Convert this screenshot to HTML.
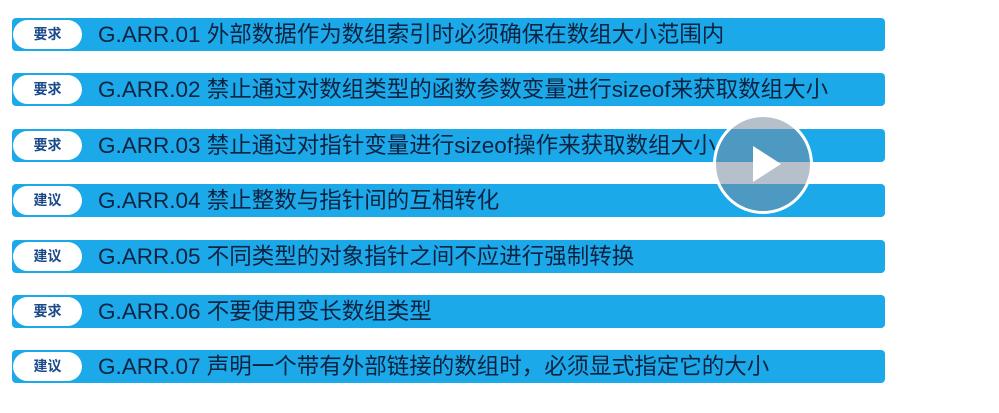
<!DOCTYPE html>
<html><head><meta charset="utf-8"><style>
body{margin:0;width:999px;height:413px;background:#fff;position:relative;overflow:hidden;font-family:"Liberation Sans","Noto Sans CJK SC",sans-serif}
.r{position:absolute;left:12px;width:873px;height:33px;background:#1ca9ea;border-radius:4px}
.p{position:absolute;left:1px;top:2px;width:69px;height:29px;background:#fff;border-radius:15px;color:#1a4a8a;font-size:14px;font-weight:bold;line-height:29px;text-align:center}
.t{position:absolute;left:86px;top:0;line-height:34px;font-size:22.5px;color:#0e2340;white-space:nowrap}
.play{position:absolute;left:713px;top:114px;width:94px;height:94px;border:3px solid #fff;border-radius:50%;background:rgba(120,140,160,0.55)}
</style></head><body>
<div class="r" style="top:18px"><div class="p">要求</div><div class="t">G.ARR.01 外部数据作为数组索引时必须确保在数组大小范围内</div></div>
<div class="r" style="top:73px"><div class="p">要求</div><div class="t">G.ARR.02 禁止通过对数组类型的函数参数变量进行sizeof来获取数组大小</div></div>
<div class="r" style="top:129px"><div class="p">要求</div><div class="t">G.ARR.03 禁止通过对指针变量进行sizeof操作来获取数组大小</div></div>
<div class="r" style="top:184px"><div class="p">建议</div><div class="t">G.ARR.04 禁止整数与指针间的互相转化</div></div>
<div class="r" style="top:240px"><div class="p">建议</div><div class="t">G.ARR.05 不同类型的对象指针之间不应进行强制转换</div></div>
<div class="r" style="top:295px"><div class="p">要求</div><div class="t">G.ARR.06 不要使用变长数组类型</div></div>
<div class="r" style="top:350px"><div class="p">建议</div><div class="t">G.ARR.07 声明一个带有外部链接的数组时，必须显式指定它的大小</div></div>
<div class="play"><svg width="94" height="94" viewBox="0 0 94 94"><polygon points="37,29 37,65 65,47" fill="#fff"/></svg></div>
</body></html>
